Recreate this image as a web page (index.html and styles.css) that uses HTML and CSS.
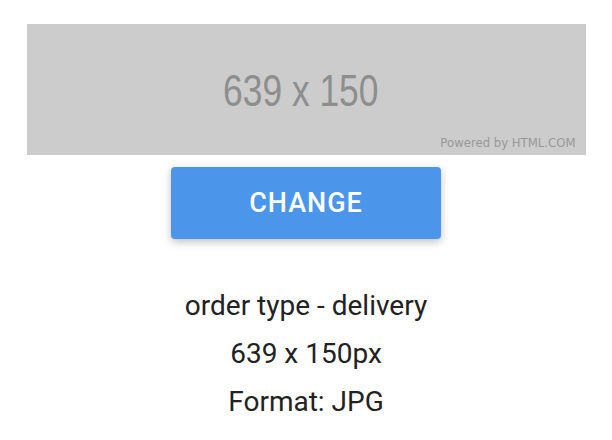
FILE: index.html
```html
<!DOCTYPE html>
<html lang="en">
<head>
    <meta charset="UTF-8">
    <meta name="viewport" content="width=device-width, initial-scale=1.0">
    <title>Order image</title>
    <link rel="stylesheet" href="styles.css">
</head>
<body>
<div class="container">
    <div class="placeholder">
        <span class="placeholder-size">639 x 150</span>
        <span class="placeholder-credit">Powered by HTML.COM</span>
    </div>

    <button class="change-btn">CHANGE</button>

    <div class="details">
        <p>order type - delivery</p>
        <p>639 x 150px</p>
        <p>Format: JPG</p>
    </div>
</div>
</body>
</html>
```

FILE: styles.css
```css
body {
    font-family: Roboto, "Liberation Sans", Arial, sans-serif;
    background-color: #fff;
    color: #222;
    margin: 0;
    padding: 0;
}
.container {
    display: flex;
    flex-direction: column;
    align-items: center;
    padding-top: 24px;
}
.placeholder {
    position: relative;
    width: 559px;
    height: 131px;
    background: #cccccc;
    display: flex;
    align-items: center;
    justify-content: center;
}
.placeholder-size {
    font-family: "Liberation Sans", Arial, sans-serif;
    font-size: 44.5px;
    color: #8e8e8e;
    transform: scaleX(0.795);
    margin: 3px 11px 0 0;
}
.placeholder-credit {
    position: absolute;
    right: 10px;
    bottom: 5px;
    font-family: "DejaVu Sans", sans-serif;
    font-size: 11.7px;
    color: #989898;
}
.change-btn {
    margin-top: 12px;
    width: 270px;
    height: 72px;
    background: #4b96ea;
    color: #fff;
    border: none;
    border-radius: 4px;
    font-family: Roboto, sans-serif;
    font-size: 27px;
    font-weight: 500;
    letter-spacing: 1px;
    box-shadow: 0 3px 8px rgba(0, 0, 0, 0.25);
    cursor: pointer;
}
.details {
    margin-top: 43px;
    text-align: center;
}
.details p {
    margin: 0;
    font-size: 28px;
    line-height: 48px;
}
```
